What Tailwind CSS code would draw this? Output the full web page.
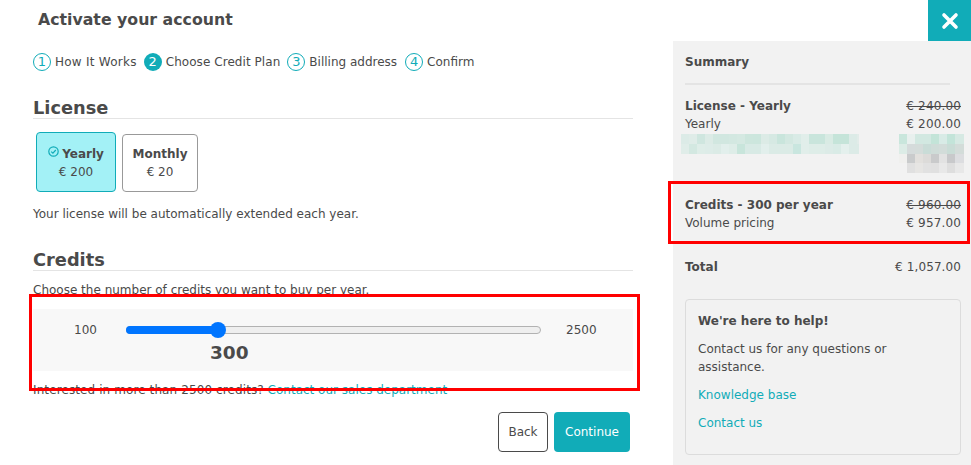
<!DOCTYPE html>
<html lang="en">
<head>
  <meta charset="UTF-8">
  <title>Activate your account</title>
  <script src="https://cdn.jsdelivr.net/npm/@tailwindcss/browser@4"></script>
</head>
<body class="relative w-[971px] h-[465px] overflow-hidden bg-white font-['DejaVu_Sans',sans-serif] text-[12px] text-[#4a4a4a]">
  <!-- header -->
  <div class="flex justify-between h-[41px]">
    <h1 class="pl-[38px] pt-[10px] text-[15.75px] leading-[19px] font-bold">Activate your account</h1>
    <button class="w-[43px] h-[41px] bg-[#11acb8] flex items-center justify-center">
      <svg width="18" height="18" viewBox="0 0 18 18"><path d="M3 3L15 15M15 3L3 15" stroke="#fff" stroke-width="3.6" stroke-linecap="round"/></svg>
    </button>
  </div>

  <div class="flex h-[424px]">
    <!-- main column -->
    <main class="w-[673px] pl-[33px] pr-[40px]">
      <ol class="flex items-center h-[18px] mt-[12px]">
        <li class="flex items-center gap-[4px] mr-[7px] tracking-[0.25px]"><span class="w-[18px] h-[18px] rounded-full border border-[#11acb8] text-[#11acb8] flex items-center justify-center text-[13px]">1</span>How It Works</li>
        <li class="flex items-center gap-[4px] mr-[7px] tracking-[0.06px]"><span class="w-[18px] h-[18px] rounded-full bg-[#11acb8] text-white flex items-center justify-center text-[13px]">2</span>Choose Credit Plan</li>
        <li class="flex items-center gap-[4px] mr-[8px]"><span class="w-[18px] h-[18px] rounded-full border border-[#11acb8] text-[#11acb8] flex items-center justify-center text-[13px]">3</span>Billing address</li>
        <li class="flex items-center gap-[4px]"><span class="w-[18px] h-[18px] rounded-full border border-[#11acb8] text-[#11acb8] flex items-center justify-center text-[13px]">4</span>Confirm</li>
      </ol>

      <h2 class="mt-[17px] h-[31px] text-[17.8px] leading-[22px] font-bold border-b border-[#e4e4e4] pt-[9px]">License</h2>

      <div class="flex items-end gap-[6px] ml-[3px] mt-[13px]">
        <div class="w-[80px] h-[60px] rounded-[4px] border border-[#11acb8] bg-[#a3f1f6] flex flex-col items-center pt-[12px] leading-[18px]">
          <div class="flex items-start font-bold gap-[3px]">
            <svg class="mt-[1px]" width="11" height="11" viewBox="0 0 11 11" fill="none" stroke="#11acb8" stroke-width="1.2"><circle cx="5.5" cy="5.5" r="4.7"/><path d="M3.2 5.6L4.9 7.2L7.8 4"/></svg>
            <span>Yearly</span>
          </div>
          <div>€ 200</div>
        </div>
        <div class="w-[76px] h-[58px] rounded-[4px] border border-[#999] bg-white flex flex-col items-center pt-[10px] leading-[18px]">
          <div class="font-bold">Monthly</div>
          <div>€ 20</div>
        </div>
      </div>

      <p class="mt-[14px] leading-[16px]">Your license will be automatically extended each year.</p>

      <h2 class="mt-[27px] h-[22px] text-[17.8px] leading-[22px] font-bold border-b border-[#e4e4e4]">Credits</h2>

      <p class="mt-[11px] leading-[16px]">Choose the number of credits you want to buy per year.</p>

      <div class="relative mt-[11px] h-[62px] bg-[#f8f8f8]">
        <span class="absolute left-[41px] top-[13px] leading-[16px]">100</span>
        <div class="absolute left-[93px] top-[17px] w-[415px] h-[8px] rounded-full bg-[#efefef] border border-[#b2b2b2]"></div>
        <div class="absolute left-[93px] top-[17px] w-[92px] h-[8px] rounded-l-full bg-[#0075ff]"></div>
        <div class="absolute left-[177px] top-[13px] w-[16px] h-[16px] rounded-full bg-[#0075ff]"></div>
        <span class="absolute left-[533px] top-[13px] leading-[16px]">2500</span>
        <span class="absolute left-[177px] top-[33px] text-[18.5px] leading-[22px] font-bold">300</span>
      </div>

      <p class="mt-[11px] leading-[16px]"><span class="tracking-[0.1px]">Interested in more than 2500 credits?</span> <a class="text-[#11acb8]">Contact our sales department</a></p>

      <div class="flex justify-end gap-[6px] mt-[14px] pr-[3px]">
        <button class="w-[50px] h-[40px] rounded-[4px] border border-[#4a4a4a] bg-white">Back</button>
        <button class="w-[76px] h-[40px] rounded-[4px] bg-[#11acb8] text-white">Continue</button>
      </div>
    </main>

    <!-- summary -->
    <aside class="w-[298px] bg-[#f2f2f2] pl-[12px] pr-[10px]">
      <h3 class="mt-[13px] font-bold leading-[16px]">Summary</h3>
      <div class="mt-[13px] h-[2px] w-[265px] bg-[#e4e4e4]"></div>

      <div class="flex justify-between mt-[12px] leading-[18px]">
        <div><div class="font-bold">License - Yearly</div><div>Yearly</div></div>
        <div class="text-right tracking-[0.15px]"><div class="line-through">€ 240.00</div><div>€ 200.00</div></div>
      </div>
      <!-- blurred out part of the screenshot -->
      <div class="relative h-[40px]">
        <svg class="absolute left-[-4px] top-[1px]" width="283" height="39" viewBox="0 0 283 39" shape-rendering="crispEdges">
          <g>
            <rect x="0" y="0" width="8" height="10" fill="#dcebe7"/><rect x="8" y="0" width="8" height="10" fill="#dfece8"/><rect x="16" y="0" width="8" height="10" fill="#cfe6df"/><rect x="24" y="0" width="8" height="10" fill="#dcebe6"/><rect x="32" y="0" width="8" height="10" fill="#d1e7e0"/><rect x="40" y="0" width="8" height="10" fill="#d1e7e0"/><rect x="48" y="0" width="8" height="10" fill="#d3e8e1"/><rect x="56" y="0" width="8" height="10" fill="#d5e9e2"/><rect x="64" y="0" width="8" height="10" fill="#cde6dd"/><rect x="72" y="0" width="8" height="10" fill="#cce6dd"/><rect x="80" y="0" width="8" height="10" fill="#dcebe6"/><rect x="88" y="0" width="8" height="10" fill="#d6e9e3"/><rect x="96" y="0" width="8" height="10" fill="#c9e5dc"/><rect x="104" y="0" width="8" height="10" fill="#d3e8e1"/><rect x="112" y="0" width="8" height="10" fill="#d9ebe6"/><rect x="120" y="0" width="8" height="10" fill="#e1eeea"/><rect x="128" y="0" width="16" height="10" fill="#c9e5dc"/><rect x="144" y="0" width="8" height="10" fill="#d9ebe4"/><rect x="152" y="0" width="16" height="10" fill="#c5e4d9"/><rect x="168" y="0" width="8" height="10" fill="#dcebe7"/><rect x="176" y="0" width="2" height="10" fill="#e2ece9"/>
            <rect x="0" y="10" width="8" height="10" fill="#e0ede9"/><rect x="8" y="10" width="8" height="10" fill="#d3e8e1"/><rect x="16" y="10" width="8" height="10" fill="#deede8"/><rect x="24" y="10" width="8" height="10" fill="#ddece8"/><rect x="32" y="10" width="8" height="10" fill="#dbebe6"/><rect x="40" y="10" width="8" height="10" fill="#e2efec"/><rect x="48" y="10" width="8" height="10" fill="#deede8"/><rect x="56" y="10" width="8" height="10" fill="#c8e5db"/><rect x="64" y="10" width="16" height="10" fill="#d8eae5"/><rect x="80" y="10" width="8" height="10" fill="#e2efec"/><rect x="88" y="10" width="24" height="10" fill="#dbebe6"/><rect x="112" y="10" width="8" height="10" fill="#c9e6df"/><rect x="120" y="10" width="8" height="10" fill="#e1eeea"/><rect x="128" y="10" width="16" height="10" fill="#deede8"/><rect x="144" y="10" width="8" height="10" fill="#dcebe7"/><rect x="152" y="10" width="8" height="10" fill="#d9ebe6"/><rect x="160" y="10" width="8" height="10" fill="#e4f0ed"/><rect x="168" y="10" width="10" height="10" fill="#dcebe7"/>
          </g>
          <g>
            <rect x="218" y="0" width="8" height="10" fill="#c9e6dc"/><rect x="226" y="0" width="8" height="10" fill="#e8f0ee"/><rect x="234" y="0" width="16" height="10" fill="#d2e8e1"/><rect x="250" y="0" width="8" height="10" fill="#c3e4d8"/><rect x="258" y="0" width="8" height="10" fill="#d8ebe6"/><rect x="266" y="0" width="8" height="10" fill="#c3e4d9"/><rect x="274" y="0" width="9" height="10" fill="#d6e9e3"/>
            <rect x="218" y="10" width="8" height="10" fill="#dcece6"/><rect x="226" y="10" width="8" height="10" fill="#d5dbdb"/><rect x="234" y="10" width="8" height="10" fill="#d4dcda"/><rect x="242" y="10" width="8" height="10" fill="#c9dcd7"/><rect x="250" y="10" width="8" height="10" fill="#cfdcd8"/><rect x="258" y="10" width="8" height="10" fill="#d2dcd9"/><rect x="266" y="10" width="8" height="10" fill="#c9dcd6"/><rect x="274" y="10" width="9" height="10" fill="#d3dcd9"/>
            <rect x="218" y="20" width="8" height="9" fill="#f0f0ee"/><rect x="226" y="20" width="8" height="9" fill="#c9cbcc"/><rect x="234" y="20" width="8" height="9" fill="#e2e0dd"/><rect x="242" y="20" width="8" height="9" fill="#dcdbd9"/><rect x="250" y="20" width="8" height="9" fill="#c9cacb"/><rect x="258" y="20" width="8" height="9" fill="#e2e2e2"/><rect x="266" y="20" width="8" height="9" fill="#c8c9cb"/><rect x="274" y="20" width="9" height="9" fill="#dcdde0"/>
            <rect x="226" y="29" width="8" height="10" fill="#e0e0e0"/><rect x="234" y="29" width="8" height="10" fill="#e6e5e3"/><rect x="242" y="29" width="8" height="10" fill="#e1e1e1"/><rect x="250" y="29" width="8" height="10" fill="#e0e0e0"/><rect x="258" y="29" width="8" height="10" fill="#e8e8e8"/><rect x="266" y="29" width="8" height="10" fill="#dedede"/><rect x="274" y="29" width="9" height="10" fill="#e8e8e8"/>
          </g>
        </svg>
      </div>

      <div class="flex justify-between mt-[23px] leading-[18px]">
        <div><div class="font-bold">Credits - 300 per year</div><div>Volume pricing</div></div>
        <div class="text-right tracking-[0.15px]"><div class="line-through">€ 960.00</div><div>€ 957.00</div></div>
      </div>

      <div class="flex justify-between mt-[26px] leading-[18px]">
        <div class="font-bold">Total</div><div class="tracking-[0.1px]">€ 1,057.00</div>
      </div>

      <div class="mt-[23px] h-[156px] rounded-[4px] border border-[#dcdcdc] px-[12px] pt-[12px] leading-[18px]">
        <div class="font-bold">We're here to help!</div>
        <p class="mt-[10px]">Contact us for any questions or assistance.</p>
        <a class="block mt-[10px] text-[#11acb8]">Knowledge base</a>
        <a class="block mt-[10px] text-[#11acb8]">Contact us</a>
      </div>
    </aside>
  </div>

  <!-- red annotation boxes -->
  <div class="absolute left-[29px] top-[294px] w-[611px] h-[97px] border-[3px] border-[#f00]"></div>
  <div class="absolute left-[668px] top-[181px] w-[302px] h-[63px] border-[3px] border-[#f00]"></div>
</body>
</html>
